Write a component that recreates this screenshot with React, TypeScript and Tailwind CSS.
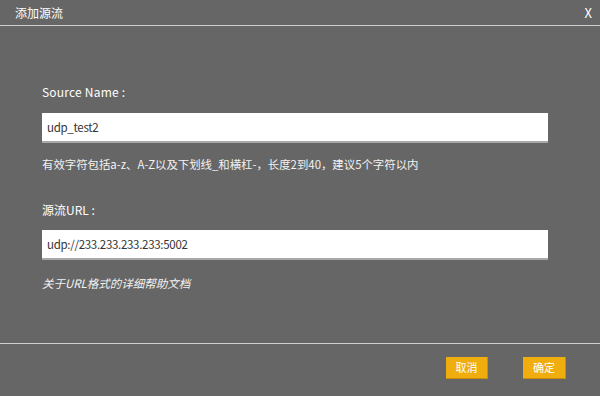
const App = () => {
  return (
    <div
      className="w-[600px] h-[396px] bg-[#666666] text-white flex flex-col"
      style={{ fontFamily: '"Noto Sans CJK SC", "Noto Sans", sans-serif' }}
    >
      {/* 标题栏 */}
      <div className="h-[26px] flex items-center justify-between pl-[15px] pr-[8px] border-b border-[#cfcfcf] text-[12px]">
        <span>添加源流</span>
        <span className="text-[13px]">X</span>
      </div>

      {/* 表单 */}
      <div className="flex-1 pl-[42px] pr-[52px] pt-[58px]">
        <div className="text-[12px] leading-[16px] tracking-[0.2px]">Source Name :</div>
        <input
          defaultValue="udp_test2"
          className="mt-[13px] w-full h-[30px] bg-white text-[#333] text-[11.5px] tracking-[-0.3px] px-[5px] border-b-2 border-[#a9a9a9] outline-none"
        />
        <div className="mt-[13px] text-[11.4px] leading-[16px] text-[#f2f2f2]">
          有效字符包括a-z、A-Z以及下划线_和横杠-，长度2到40，建议5个字符以内
        </div>

        <div className="mt-[30px] text-[12px] leading-[16px]">源流URL :</div>
        <input
          defaultValue="udp://233.233.233.233:5002"
          className="mt-[12px] w-full h-[30px] bg-white text-[#333] text-[11.5px] tracking-[-0.3px] px-[5px] border-b-2 border-[#a9a9a9] outline-none"
        />
        <div className="mt-[15px] text-[11.5px] leading-[16px] italic text-[#f2f2f2]">
          关于URL格式的详细帮助文档
        </div>
      </div>

      {/* 底部按钮 */}
      <div className="h-[53px] border-t border-[#cfcfcf] flex items-start justify-end gap-[35px] pr-[34px] pt-[13px]">
        <button className="w-[42px] h-[22px] bg-[#f0ad0e] text-[11px] text-white border-r border-b border-[#c98f08]">
          取消
        </button>
        <button className="w-[43px] h-[22px] bg-[#f0ad0e] text-[11px] text-white border-r border-b border-[#c98f08]">
          确定
        </button>
      </div>
    </div>
  );
};

export default App;
